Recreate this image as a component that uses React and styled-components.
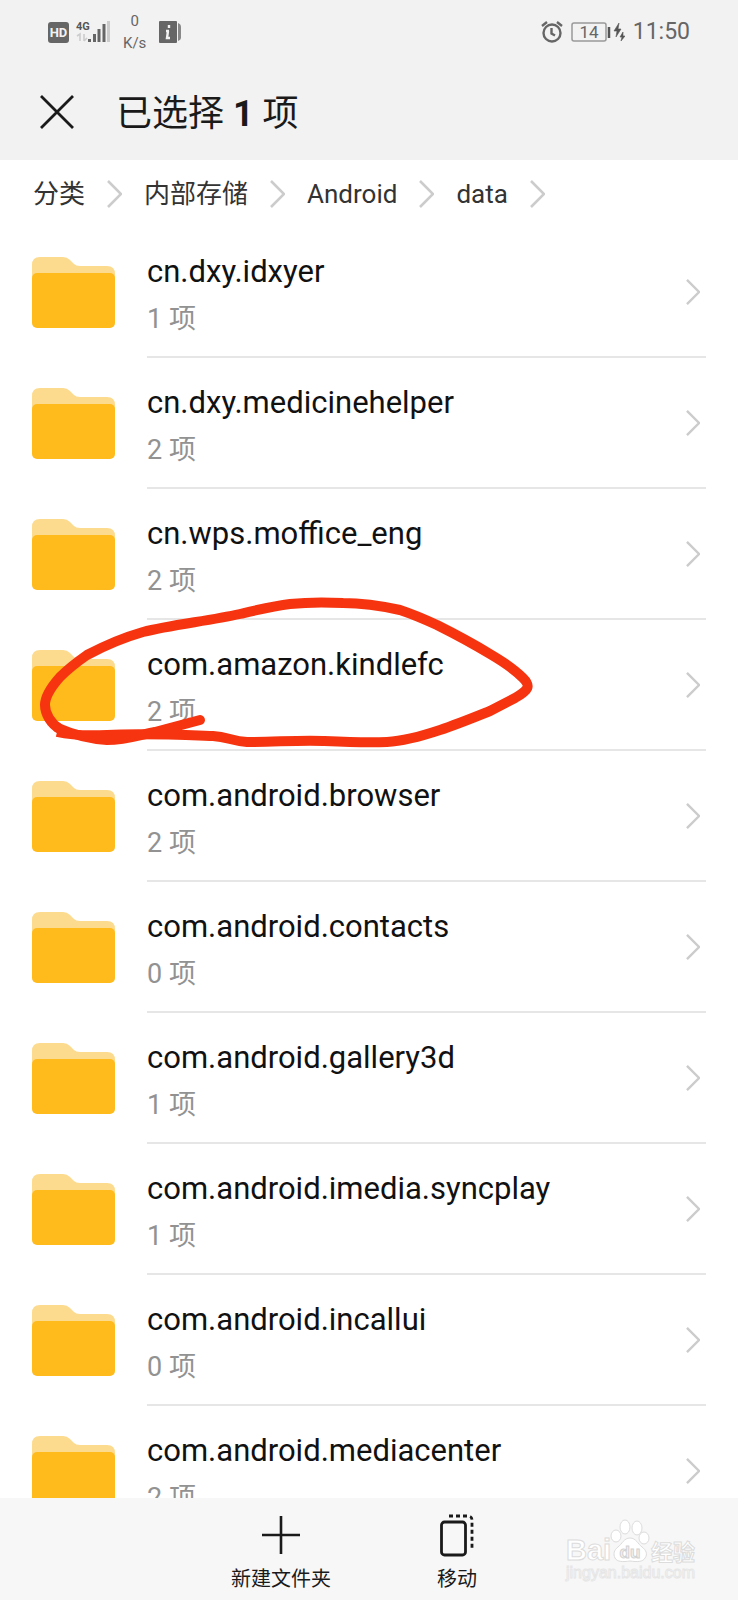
import { Fragment } from 'react'
import styled, { createGlobalStyle } from 'styled-components'

const GlobalStyle = createGlobalStyle`
  * {
    box-sizing: border-box;
  }
  body {
    margin: 0;
    background-color: #fff;
    font-family: Roboto, "Noto Sans CJK SC", sans-serif;
  }
`

const Page = styled.div`
  display: flex;
  flex-direction: column;
  height: 100vh;
  overflow: hidden;
  position: relative;
`

const Header = styled.header`
  background-color: #f2f2f2;
  flex: none;
`
const StatusBar = styled.div`
  display: flex;
  justify-content: space-between;
  height: 64px;
  padding: 0 48px;
  color: #666;
`
const StatusGroup = styled.div`
  display: flex;
  align-items: center;
  gap: ${(props) => props.$gap}px;
`
const Speed = styled.div`
  display: flex;
  flex-direction: column;
  align-items: center;
  margin: 0 6px;
  font-size: 15px;
  line-height: 22px;
`
const Clock = styled.span`
  font-size: 23px;
  line-height: 28px;
`
const TitleRow = styled.div`
  display: flex;
  align-items: center;
  height: 96px;
  padding: 0 32px;
  gap: 34px;
`
const CloseButton = styled.button`
  display: flex;
  padding: 0 8px;
  border: 0;
  background: none;
  color: #1a1a1a;
`
const Title = styled.h1`
  margin: 0;
  padding-top: 4px;
  font-size: 36px;
  line-height: 48px;
  font-weight: 400;
  color: #1a1a1a;
`

const Breadcrumb = styled.nav`
  display: flex;
  align-items: center;
  flex: none;
  gap: 22px;
  height: 67px;
  padding: 0 33px;
`
const Crumb = styled.a`
  font-size: 26px;
  line-height: 32px;
  color: #333;
  text-decoration: none;
`

const List = styled.ul`
  flex: 1;
  min-height: 0;
  margin: 0;
  padding: 0 32px;
  overflow: hidden;
  list-style: none;
`
const Row = styled.li`
  display: flex;
  align-items: center;
  gap: 32px;
  height: 131px;
  position: relative;
`
const RowLink = styled.a`
  display: flex;
  align-items: center;
  justify-content: space-between;
  flex: 1;
  height: 100%;
  padding-right: 6px;
  border-bottom: 2px solid #e6e6e6;
  text-decoration: none;
`
const RowText = styled.div`
  padding-top: 8px;
`
const Name = styled.div`
  font-size: 31px;
  line-height: 36px;
  color: #111;
`
const Count = styled.div`
  margin-top: 11px;
  font-size: 27px;
  line-height: 36px;
  color: #929292;
`
const Scribble = styled.svg`
  position: absolute;
  left: 0;
  top: -27px;
  pointer-events: none;
`

const Toolbar = styled.footer`
  display: flex;
  justify-content: center;
  flex: none;
  height: 102px;
  background-color: #f7f7f7;
`
const ToolButton = styled.button`
  display: flex;
  flex-direction: column;
  align-items: center;
  gap: 7px;
  width: 176px;
  padding: 15px 0 0;
  border: 0;
  background: none;
  font-family: inherit;
  font-size: 20px;
  line-height: 30px;
  color: #1a1a1a;
`

const Watermark = styled.div`
  position: absolute;
  right: 38px;
  bottom: 16px;
  line-height: 0;
`

const folders = [
  { name: 'cn.dxy.idxyer', count: 1 },
  { name: 'cn.dxy.medicinehelper', count: 2 },
  { name: 'cn.wps.moffice_eng', count: 2 },
  { name: 'com.amazon.kindlefc', count: 2, circled: true },
  { name: 'com.android.browser', count: 2 },
  { name: 'com.android.contacts', count: 0 },
  { name: 'com.android.gallery3d', count: 1 },
  { name: 'com.android.imedia.syncplay', count: 1 },
  { name: 'com.android.incallui', count: 0 },
  { name: 'com.android.mediacenter', count: 2 },
]

const path = ['分类', '内部存储', 'Android', 'data']

const Chevron = ({ width, height }) => (
  <svg width={width} height={height} viewBox="0 0 15 28" fill="none" stroke="#ccc" strokeWidth="2.6">
    <path d="M1 1L14 14L1 27" />
  </svg>
)

const FolderIcon = () => (
  <svg width="83" height="71" viewBox="0 0 83 71">
    <path d="M0 26V8Q0 0 8 0H31Q35 0 38 3L42 7Q44 9 48 9H75Q83 9 83 17V26Z" fill="#fddb8e" />
    <rect y="16" width="83" height="55" rx="5" fill="#ffbb1c" />
  </svg>
)

// hand-drawn red loop round one row
const RedCircle = () => (
  <Scribble width="510" height="165" viewBox="32 593 510 165" fill="none" stroke="#f63510" strokeWidth="10" strokeLinejoin="round">
    <path d="M57 732C70 735 85 736 107 735C140 733 185 735 213 736C228 737 232 741 247 742C275 742 300 740 323 741C345 742 366 743 387 742C405 741 422 736 440 730C458 724 475 717 490 711L515 698C529 690 531 686 523 678C514 669 502 661 490 654C472 643 455 634 437 625C424 619 412 614 400 610C382 606 362 603 343 603C325 602 308 602 290 604C273 606 257 610 240 614C208 621 170 625 143 632C122 638 104 646 87 655C77 662 68 669 60 677C52 686 45 696 45 705C45 714 51 724 60 729" />
    <path d="M58 728C74 735 90 739 107 740C125 740 140 735 155 732L200 720" strokeLinecap="round" />
  </Scribble>
)

const BaiduMark = () => (
  <svg width="136" height="66" viewBox="0 0 136 66" fill="#fff" stroke="#dcdcdc" strokeWidth="1" fontFamily="Liberation Sans, Noto Sans CJK SC, sans-serif">
    <text x="2" y="42" fontSize="29" fontWeight="700">Bai</text>
    <ellipse cx="52" cy="18" rx="5" ry="6" />
    <ellipse cx="61" cy="9" rx="5" ry="7" />
    <ellipse cx="73" cy="10" rx="5" ry="7" />
    <ellipse cx="80" cy="20" rx="5" ry="6" />
    <path d="M66 20C60 20 58 26 54 29C50 32 49 36 51 40C53 44 59 44 66 43C73 44 79 44 81 40C84 36 82 32 78 29C74 26 72 20 66 20Z" />
    <text x="66" y="40" textAnchor="middle" fontSize="17" fontWeight="700" fill="#f2f2f2" stroke="#d2d2d2">du</text>
    <text x="87" y="42" fontSize="22" fontWeight="700">经验</text>
    <text x="2" y="60" fontSize="16" stroke="#e6e6e6">jingyan.baidu.com</text>
  </svg>
)

export default function App() {
  return (
    <Page>
      <GlobalStyle />
      <Header>
        <StatusBar>
          <StatusGroup $gap={7}>
            <svg width="21" height="21" viewBox="0 0 21 21">
              <rect width="21" height="21" rx="3" fill="#666" />
              <text x="10.500" y="15" textAnchor="middle" fontSize="13" fontWeight="700" fill="#f2f2f2">HD</text>
            </svg>
            <svg width="34" height="24" viewBox="0 0 34 24">
              <text x="0" y="10" fontSize="11" fontWeight="700" fill="#555">4G</text>
              <path d="M1 16L4 14V21M8 14V21M8 21L11 18" fill="none" stroke="#ccc" strokeWidth="1.6" />
              <path d="M13.500 19V22M18.500 14V22M23 9V22M28 4V22" stroke="#666" strokeWidth="3" />
              <path d="M32.500 1V22" stroke="#ccc" strokeWidth="3" />
            </svg>
            <Speed>
              <span>0</span>
              <span>K/s</span>
            </Speed>
            <svg width="22" height="24" viewBox="0 0 22 24">
              <rect y="1" width="18" height="22" rx="1" fill="#666" />
              <path d="M19 3Q22 4 22 7V18Q22 20 19 21Z" fill="#888" />
              <path d="M9 11L8 18H11M7 11H10M10 5V8" fill="none" stroke="#f2f2f2" strokeWidth="2.400" />
            </svg>
          </StatusGroup>
          <StatusGroup $gap={8}>
            <svg width="22" height="22" viewBox="0 0 22 22" fill="none" stroke="#666" strokeWidth="2.4">
              <circle cx="11" cy="12" r="8.500" />
              <path d="M10.500 7V12.500L14 14.500M1 5L6 1M21 5L16 1" />
            </svg>
            <svg width="54" height="20" viewBox="0 0 54 20">
              <rect x="1" y="1" width="34" height="18" rx="2" fill="none" stroke="#999" strokeWidth="1.500" />
              <text x="18" y="16" textAnchor="middle" fontSize="17" fill="#666">14</text>
              <path d="M38 5V16" stroke="#555" strokeWidth="2.500" />
              <path d="M48 1L43 9H46L45 15L50 7H47ZM52 10L49 15H51L50 19L54 14H52Z" fill="#555" stroke="#555" strokeWidth="0.6" />
            </svg>
            <Clock>11:50</Clock>
          </StatusGroup>
        </StatusBar>
        <TitleRow>
          <CloseButton aria-label="关闭">
            <svg width="34" height="34" viewBox="0 0 34 34" stroke="currentColor" strokeWidth="2.800">
              <path d="M1 1L33 33M33 1L1 33" />
            </svg>
          </CloseButton>
          <Title>已选择 <b>1</b> 项</Title>
        </TitleRow>
      </Header>
      <Breadcrumb>
        {path.map((item) => (
          <Fragment key={item}>
            <Crumb href="#">{item}</Crumb>
            <Chevron width={15} height={28} />
          </Fragment>
        ))}
      </Breadcrumb>
      <List>
        {folders.map(({ name, count, circled }) => (
          <Row key={name}>
            <FolderIcon />
            <RowLink href="#">
              <RowText>
                <Name>{name}</Name>
                <Count>{count} 项</Count>
              </RowText>
              <Chevron width={14} height={26} />
            </RowLink>
            {circled && <RedCircle />}
          </Row>
        ))}
      </List>
      <Toolbar>
        <ToolButton>
          <svg width="44" height="44" viewBox="0 0 44 44" stroke="currentColor" strokeWidth="2.600">
            <path d="M22 3V41M3 22H41" />
          </svg>
          新建文件夹
        </ToolButton>
        <ToolButton>
          <svg width="34" height="44" viewBox="0 0 34 44" fill="none" stroke="currentColor" strokeWidth="2.800">
            <rect x="1.500" y="9" width="24" height="33" rx="3" />
            <path d="M9 3H28Q32 3 32 7V35" strokeDasharray="4 3" />
          </svg>
          移动
        </ToolButton>
      </Toolbar>
      <Watermark>
        <BaiduMark />
      </Watermark>
    </Page>
  )
}
